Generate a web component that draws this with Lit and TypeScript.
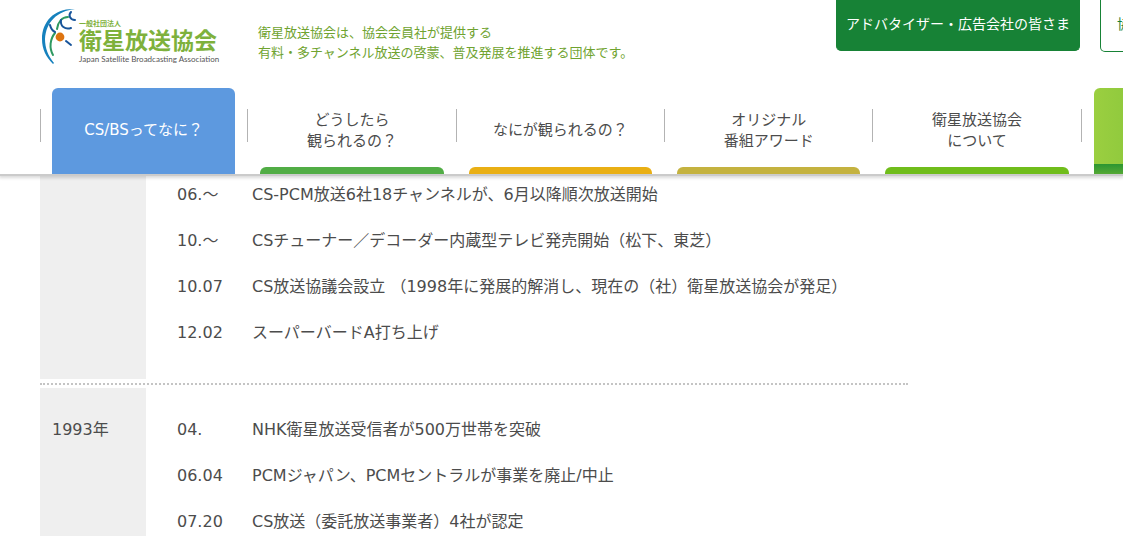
import { LitElement, html, css } from "lit";
import { customElement } from "lit/decorators.js";

const NAV = [
  { lines: ["CS/BSってなに？"], tone: "blue" },
  { lines: ["どうしたら", "観られるの？"], tone: "green" },
  { lines: ["なにが観られるの？"], tone: "amber" },
  { lines: ["オリジナル", "番組アワード"], tone: "olive" },
  { lines: ["衛星放送協会", "について"], tone: "lime" },
  { lines: [], tone: "search" },
];

const YEARS = [
  {
    year: "",
    events: [
      ["06.～", "CS-PCM放送6社18チャンネルが、6月以降順次放送開始"],
      ["10.～", "CSチューナー／デコーダー内蔵型テレビ発売開始（松下、東芝）"],
      ["10.07", "CS放送協議会設立 （1998年に発展的解消し、現在の（社）衛星放送協会が発足）"],
      ["12.02", "スーパーバードA打ち上げ"],
    ],
  },
  {
    year: "1993年",
    events: [
      ["04.", "NHK衛星放送受信者が500万世帯を突破"],
      ["06.04", "PCMジャパン、PCMセントラルが事業を廃止/中止"],
      ["07.20", "CS放送（委託放送事業者）4社が認定"],
    ],
  },
];

@customElement("site-logo")
export class SiteLogo extends LitElement {
  static styles = css`
    :host { display: block; }
    svg { display: block; width: 180px; height: 60px; overflow: visible; }
    .jp { font-family: "Noto Sans CJK JP", sans-serif; fill: #7eb13c; font-weight: 700; }
    .small { font-size: 7px; }
    .large { font-size: 23px; }
    .en { font-family: Lato, sans-serif; font-size: 8px; fill: #555; }
    .stroke { fill: none; stroke-linecap: round; }
    .navy { stroke: #17549a; stroke-width: 2; }
    .leaf { stroke: #2e9961; stroke-width: 2; }
  `;
  render() {
    return html`<svg viewBox="0 0 180 60" role="img" aria-label="一般社団法人 衛星放送協会">
      <path d="M35 2C15 1 2 14 2 32c0 10 4 18 11 25l1-1C8 49 5 41 5 32 6 15 17 4 35 2Z" fill="#1681bd" />
      <path class="stroke leaf" d="M15 26c-5 6-6 15-2 22" stroke-width="3" />
      <path class="stroke leaf" d="M28 10c-6 0-10 5-11 12" />
      <path class="stroke navy" d="M10 18c1 4 3 6 5 7" />
      <path class="stroke navy" d="M21 13c-1 6 4 10 10 8" />
      <path class="stroke navy" d="M31 5c-3 3-1 8 4 8" />
      <path class="stroke navy" d="m26 34 5 4" />
      <circle cx="20" cy="30" r="4.4" fill="#de7410" />
      <text class="jp small" x="39" y="19">一般社団法人</text>
      <text class="jp large" x="39" y="42">衛星放送協会</text>
      <text class="en" x="39" y="55">Japan Satellite Broadcasting Association</text>
    </svg>`;
  }
}

@customElement("app-root")
export class AppRoot extends LitElement {
  static styles = css`
    :host {
      display: block;
      height: 100vh;
      overflow: hidden;
      background: #fff;
      color: #4c4c4c;
      font: 16px/22px "DejaVu Sans", "Noto Sans CJK JP", sans-serif;
    }
    a { color: inherit; text-decoration: none; }
    .header {
      position: relative;
      background: #fff;
      box-shadow: 0 2px 0 #cbcbcb, 0 3px 3px 1px rgba(0, 0, 0, 0.15);
    }
    .wide { min-width: 1250px; margin: 0 40px; }
    .top { display: flex; align-items: flex-start; height: 88px; }
    .logo { padding-top: 7px; }
    .lead { margin: 0 0 0 38px; padding-top: 23px; font-size: 13px; line-height: 20px; color: #6fa32f; }
    .links { display: flex; gap: 20px; margin-left: auto; }
    .link {
      box-sizing: border-box;
      width: 190px;
      height: 52px;
      padding: 13px 0 0 16px;
      border: 1px solid #178236;
      border-top: 0;
      border-radius: 0 0 5px 5px;
      font-size: 14px;
      color: #178236;
      white-space: nowrap;
    }
    .solid { width: 244px; height: 51px; padding-left: 9px; background: #178236; color: #fff; }
    .nav { display: grid; grid-template-columns: repeat(6, 1fr); }
    .cell { display: grid; grid-template-columns: 12px 1fr 13px; }
    .rule { width: 1px; height: 33px; margin-top: 21px; }
    .cell:first-child .rule.start, .rule.end { background: #b3b3b3; }
    .rule.end { justify-self: end; }
    .tab {
      display: flex;
      flex-direction: column;
      height: 86px;
      overflow: hidden;
      border-radius: 6px 6px 0 0;
      font-size: 15px;
      line-height: 21px;
      text-align: center;
    }
    .label { flex: 1; display: flex; flex-direction: column; justify-content: center; padding-top: 6px; }
    .bar { height: 7px; border-radius: 6px 6px 0 0; }
    .blue { background: #5d99df; color: #fff; }
    .green .bar { background: #51ad45; }
    .amber .bar { background: #e9af14; }
    .olive .bar { background: #c4b23f; }
    .lime .bar { background: #70bd1b; }
    .search { background: linear-gradient(90deg, #9bcf40, #5bb030); }
    .search .bar { height: 10px; border-radius: 0; background: linear-gradient(#2b9632, #55a935); }
    .timeline { max-width: 868px; margin-left: 40px; }
    .block { display: grid; grid-template-columns: 106px 1fr; column-gap: 31px; }
    .block + .block { margin-top: 4px; border-top: 2px dotted #c4c4c4; padding-top: 3px; }
    .when { margin: 0; padding: 31px 12px; background: #efefef; font-size: 16px; font-weight: 400; }
    .events { border-collapse: collapse; margin: 19px 0 23px; }
    .first .events { margin-top: -2px; }
    .events th, .events td { padding: 12px 0; text-align: left; font-weight: 400; white-space: nowrap; }
    .events th { width: 75px; }
  `;
  render() {
    return html`
      <header class="header">
        <div class="wide">
          <div class="top">
            <a class="logo" href="#"><site-logo></site-logo></a>
            <p class="lead">衛星放送協会は、協会会員社が提供する<br />有料・多チャンネル放送の啓蒙、普及発展を推進する団体です。</p>
            <div class="links">
              <a class="link solid" href="#">アドバタイザー・広告会社の皆さま</a>
              <a class="link" href="#">協会会員社の皆さま</a>
            </div>
          </div>
          <nav class="nav">
            ${NAV.map((n) => html`<div class="cell">
              <span class="rule start"></span>
              <a class="tab ${n.tone}" href="#">
                <span class="label">${n.lines.map((l) => html`<span>${l}</span>`)}</span>
                <span class="bar"></span>
              </a>
              <span class="rule end"></span>
            </div>`)}
          </nav>
        </div>
      </header>
      <main class="timeline">
        ${YEARS.map((y, i) => html`<section class="block ${i === 0 ? "first" : ""}">
          <h2 class="when">${y.year}</h2>
          <table class="events">
            <tbody>
              ${y.events.map(([d, t]) => html`<tr><th scope="row">${d}</th><td>${t}</td></tr>`)}
            </tbody>
          </table>
        </section>`)}
      </main>
    `;
  }
}
